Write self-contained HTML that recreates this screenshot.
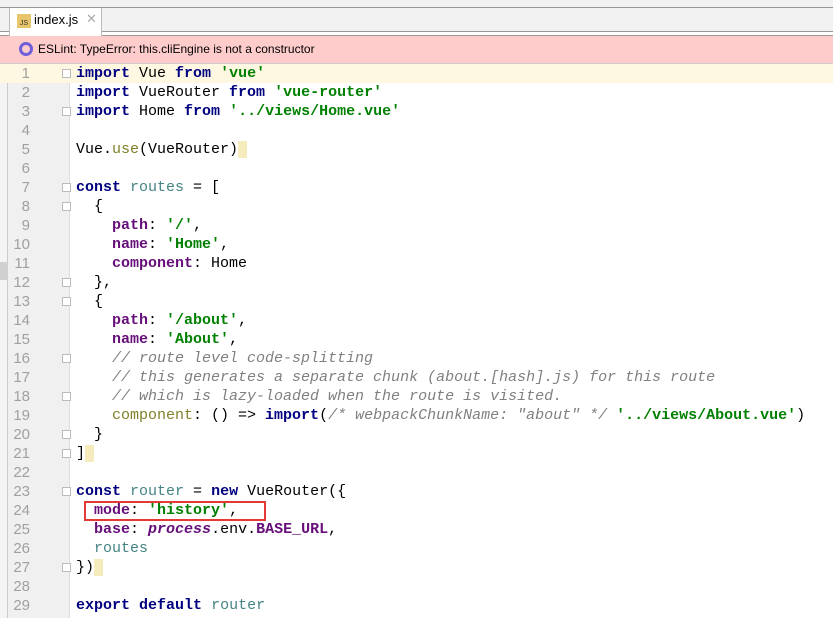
<!DOCTYPE html>
<html><head><meta charset="utf-8"><style>
*{margin:0;padding:0;box-sizing:border-box}
body{width:833px;height:618px;overflow:hidden;background:#fff;position:relative;font-family:"Liberation Sans",sans-serif}
.top{position:absolute;left:0;top:0;width:833px;height:8px;background:#f2f2f2;border-bottom:1px solid #999}
.tabbar{position:absolute;left:0;top:8px;width:833px;height:24px;background:#f2f2f2;border-bottom:1px solid #999}
.tab{position:absolute;left:9px;top:8px;width:93px;height:28px;background:#fff;border-left:1px solid #bbb;border-right:1px solid #bbb;font-size:13px;color:#000}
.gap{position:absolute;left:0;top:35px;width:833px;height:1px;background:#999}
.err{position:absolute;left:0;top:36px;width:833px;height:28px;background:#ffcccc;border-bottom:1px solid #ccc;font-size:12px;color:#000}
.gut{position:absolute;left:8px;top:64px;width:62px;height:554px;background:#f0f0f0;border-right:1px solid #ddd}
.strip{position:absolute;left:0;top:64px;width:8px;height:554px;background:#f4f4f4;border-right:1px solid #ccc}
.cur{position:absolute;left:0;top:64px;width:833px;height:19px;background:#fef8e2}
.code{position:absolute;left:0;top:64px;font-family:"Liberation Mono",monospace;font-size:15px;line-height:19px;white-space:pre}
.ln{position:absolute;left:8px;width:22px;text-align:right;color:#a0a0a0;font-family:"Liberation Sans",sans-serif;font-size:15px}
.tx{position:absolute;left:76px}
.k{color:#000080;font-weight:bold}.s{color:#008000;font-weight:bold}.p{color:#660e7a;font-weight:bold}
.v{color:#458383}.c{color:#808080;font-style:italic}.o{color:#80802a}.i{color:#660e7a;font-weight:bold;font-style:italic}
.m{background:#f6ebbc}
.fold{position:absolute;left:62px;width:9px;height:9px;border:1px solid #bbb;background:#fff}
</style></head><body>
<div class="top"></div><div class="tabbar"></div><div class="gap"></div>
<div class="tab"><div style="position:absolute;left:7px;top:6px;width:14px;height:14px;background:#e8c46a;font-size:7px;line-height:20px;text-align:center;color:#333">JS</div><span style="position:absolute;left:24px;top:4px">index.js</span><span style="position:absolute;left:76px;top:3px;color:#aaa">✕</span></div>
<div class="err"><span style="position:absolute;left:19px;top:6px;width:14px;height:14px;border:3px solid #6f5fd8;border-radius:50%;background:#ffcccc"></span><span style="position:absolute;left:38px;top:6px">ESLint: TypeError: this.cliEngine is not a constructor</span></div>
<div class="gut"></div><div class="strip"></div>
<div style="position:absolute;left:0;top:262px;width:8px;height:18px;background:#d0d0d0"></div>
<div class="cur"></div>
<div class="fold" style="top:69px"></div><div class="fold" style="top:107px"></div><div class="fold" style="top:183px"></div><div class="fold" style="top:202px"></div><div class="fold" style="top:278px"></div><div class="fold" style="top:297px"></div><div class="fold" style="top:354px"></div><div class="fold" style="top:392px"></div><div class="fold" style="top:430px"></div><div class="fold" style="top:449px"></div><div class="fold" style="top:487px"></div><div class="fold" style="top:563px"></div>
<div class="code">
<div class="ln" style="top:0">1</div><div class="tx" style="top:0"><span class="k">import</span> Vue <span class="k">from</span> <span class="s">'vue'</span></div>
<div class="ln" style="top:19px">2</div><div class="tx" style="top:19px"><span class="k">import</span> VueRouter <span class="k">from</span> <span class="s">'vue-router'</span></div>
<div class="ln" style="top:38px">3</div><div class="tx" style="top:38px"><span class="k">import</span> Home <span class="k">from</span> <span class="s">'../views/Home.vue'</span></div>
<div class="ln" style="top:57px">4</div>
<div class="ln" style="top:76px">5</div><div class="tx" style="top:76px">Vue.<span class="o">use</span>(VueRouter)<span class="m"> </span></div>
<div class="ln" style="top:95px">6</div>
<div class="ln" style="top:114px">7</div><div class="tx" style="top:114px"><span class="k">const</span> <span class="v">routes</span> = [</div>
<div class="ln" style="top:133px">8</div><div class="tx" style="top:133px">  {</div>
<div class="ln" style="top:152px">9</div><div class="tx" style="top:152px">    <span class="p">path</span>: <span class="s">'/'</span>,</div>
<div class="ln" style="top:171px">10</div><div class="tx" style="top:171px">    <span class="p">name</span>: <span class="s">'Home'</span>,</div>
<div class="ln" style="top:190px">11</div><div class="tx" style="top:190px">    <span class="p">component</span>: Home</div>
<div class="ln" style="top:209px">12</div><div class="tx" style="top:209px">  },</div>
<div class="ln" style="top:228px">13</div><div class="tx" style="top:228px">  {</div>
<div class="ln" style="top:247px">14</div><div class="tx" style="top:247px">    <span class="p">path</span>: <span class="s">'/about'</span>,</div>
<div class="ln" style="top:266px">15</div><div class="tx" style="top:266px">    <span class="p">name</span>: <span class="s">'About'</span>,</div>
<div class="ln" style="top:285px">16</div><div class="tx" style="top:285px">    <span class="c">// route level code-splitting</span></div>
<div class="ln" style="top:304px">17</div><div class="tx" style="top:304px">    <span class="c">// this generates a separate chunk (about.[hash].js) for this route</span></div>
<div class="ln" style="top:323px">18</div><div class="tx" style="top:323px">    <span class="c">// which is lazy-loaded when the route is visited.</span></div>
<div class="ln" style="top:342px">19</div><div class="tx" style="top:342px">    <span class="o">component</span>: () => <span class="k">import</span>(<span class="c">/* webpackChunkName: "about" */</span> <span class="s">'../views/About.vue'</span>)</div>
<div class="ln" style="top:361px">20</div><div class="tx" style="top:361px">  }</div>
<div class="ln" style="top:380px">21</div><div class="tx" style="top:380px">]<span class="m"> </span></div>
<div class="ln" style="top:399px">22</div>
<div class="ln" style="top:418px">23</div><div class="tx" style="top:418px"><span class="k">const</span> <span class="v">router</span> = <span class="k">new</span> VueRouter({</div>
<div class="ln" style="top:437px">24</div><div class="tx" style="top:437px">  <span class="p">mode</span>: <span class="s">'history'</span>,</div>
<div class="ln" style="top:456px">25</div><div class="tx" style="top:456px">  <span class="p">base</span>: <span class="i">process</span>.env.<span class="p">BASE_URL</span>,</div>
<div class="ln" style="top:475px">26</div><div class="tx" style="top:475px">  <span class="v">routes</span></div>
<div class="ln" style="top:494px">27</div><div class="tx" style="top:494px">})<span class="m"> </span></div>
<div class="ln" style="top:513px">28</div>
<div class="ln" style="top:532px">29</div><div class="tx" style="top:532px"><span class="k">export</span> <span class="k">default</span> <span class="v">router</span></div>
</div>
<div style="position:absolute;left:84px;top:501px;width:182px;height:20px;border:2px solid #e53935"></div>
</body></html>
